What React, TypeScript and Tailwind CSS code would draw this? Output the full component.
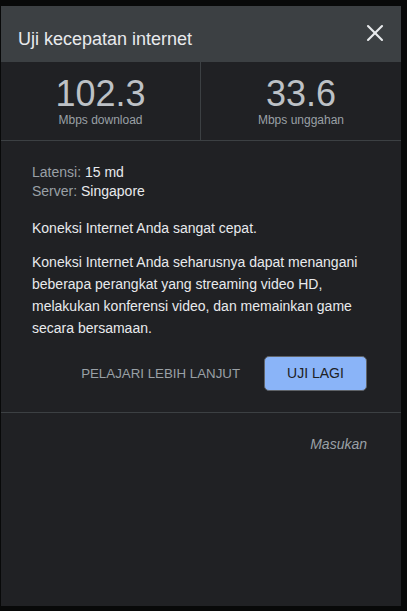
import { X } from 'lucide-react'

export default function App() {
  return (
    <div className="min-h-[611px] w-[407px] bg-[#080909] pt-[6px] pl-px font-['Liberation_Sans',Arial,sans-serif]">
      <div className="flex h-[600px] w-[400px] flex-col bg-[#202124]">
        {/* Header */}
        <div className="flex h-[56px] items-center justify-between bg-[#3c4043] pl-[17px] pr-[12px]">
          <h1 className="pt-[10px] text-[18px] text-[#e8eaed]">Uji kecepatan internet</h1>
          <X size={28} strokeWidth={1.8} className="mb-[2px] text-[#e8eaed]" />
        </div>

        {/* Stats */}
        <div className="flex h-[79px] border-b border-[#3c4043]">
          <div className="flex w-[200px] flex-col items-center border-r border-[#3c4043] pt-[15px]">
            <span className="text-[36px] leading-[34px] text-[#bdc1c6]">102.3</span>
            <span className="mt-[2px] text-[12px] leading-[14px] text-[#9aa0a6]">Mbps download</span>
          </div>
          <div className="flex flex-1 flex-col items-center pt-[15px]">
            <span className="text-[36px] leading-[34px] text-[#bdc1c6]">33.6</span>
            <span className="mt-[2px] text-[12px] leading-[14px] text-[#9aa0a6]">Mbps unggahan</span>
          </div>
        </div>

        {/* Body */}
        <div className="px-[31px] pt-[22px] text-[14px] text-[#e8eaed]">
          <p className="leading-[19px]">
            <span className="text-[#9aa0a6]">Latensi: </span>15 md
          </p>
          <p className="leading-[19px]">
            <span className="text-[#9aa0a6]">Server: </span>Singapore
          </p>
          <p className="mt-[17px] leading-[20px]">Koneksi Internet Anda sangat cepat.</p>
          <p className="mt-[13px] leading-[22px]">
            Koneksi Internet Anda seharusnya dapat menangani beberapa perangkat yang streaming video HD,
            melakukan konferensi video, dan memainkan game secara bersamaan.
          </p>
          <div className="mt-[17px] flex items-center justify-end gap-[24px] pr-[3px]">
            <button className="text-[13.3px] text-[#9aa0a6]">PELAJARI LEBIH LANJUT</button>
            <button className="h-[35px] w-[103px] rounded-[5px] border border-[#5f6368] bg-[#8ab4f8] text-[14px] text-[#202124]">
              UJI LAGI
            </button>
          </div>
        </div>

        <div className="mt-[21px] border-t border-[#3c4043]" />

        <div className="flex justify-end px-[34px] pt-[21px]">
          <span className="text-[14px] italic text-[#9aa0a6]">Masukan</span>
        </div>
      </div>
    </div>
  )
}
